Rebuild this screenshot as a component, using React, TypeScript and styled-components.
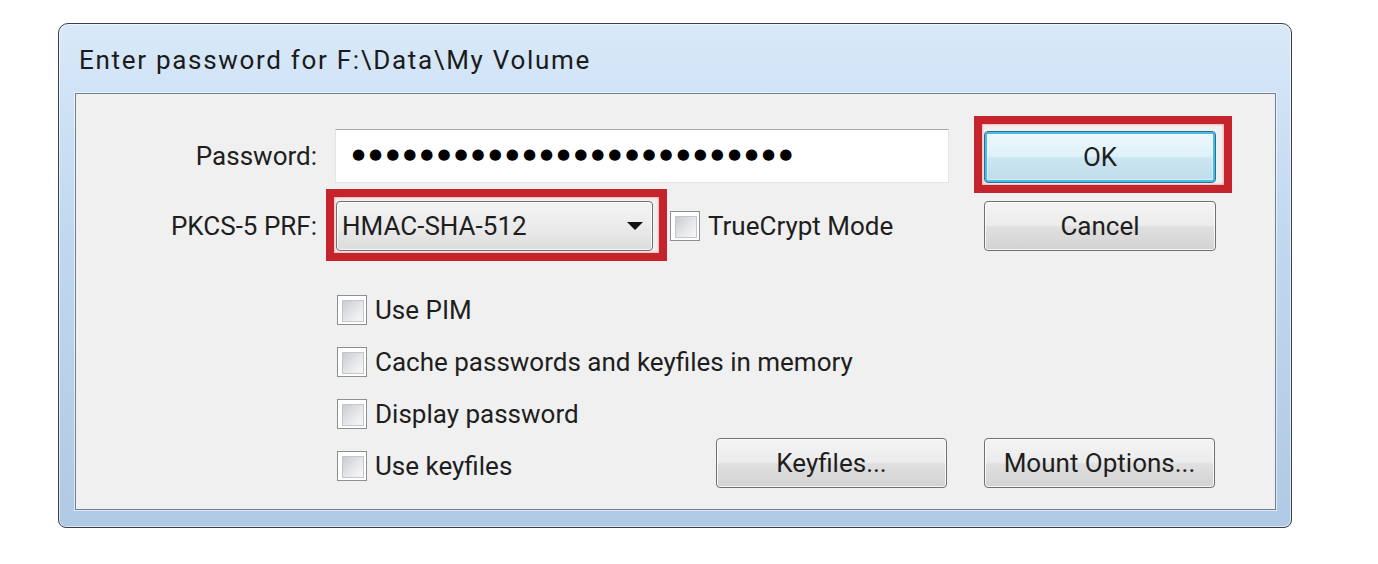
import React from 'react';
import styled, { createGlobalStyle } from 'styled-components';

const GlobalStyle = createGlobalStyle`
  html, body { margin: 0; padding: 0; background: #ffffff; }
  body { font-family: Roboto, "Liberation Sans", sans-serif; color: #1e1e1e; }
  * { box-sizing: border-box; }
`;

const Stage = styled.div`
  width: 1378px;
  height: 564px;
  padding: 23px 0 0 58px;
`;

const Window = styled.div`
  width: 1234px;
  height: 505px;
  border: 1px solid #3b4047;
  border-radius: 10px 10px 8px 8px;
  background: linear-gradient(180deg, #d9e9f8 0%, #d0e3f6 14%, #c0d7ef 45%, #b6cee8 80%, #b0c9e4 100%);
  box-shadow: inset 0 0 0 1px rgba(255, 255, 255, 0.55);
  display: flex;
  flex-direction: column;
`;

const TitleBar = styled.div`
  height: 69px;
  display: flex;
  align-items: center;
  padding: 2px 0 0 20px;
  font-size: 26px;
  letter-spacing: 1.7px;
  color: #1b1b1b;
  white-space: nowrap;
`;

const Panel = styled.div`
  flex: 1;
  margin: 0 15px 17px 16px;
  background: #f0f0f0;
  border: 1px solid #6f7f90;
  box-shadow: 0 0 0 1px rgba(255, 255, 255, 0.6);
  display: flex;
  flex-direction: column;
  padding: 34px 0 21px 0;
`;

const TopGrid = styled.div`
  display: grid;
  grid-template-columns: 241px 631px 232px;
  grid-template-rows: 55px 50px;
  column-gap: 18px;
  row-gap: 18px;
  align-items: center;
`;

const Label = styled.label`
  justify-self: end;
  font-size: 26px;
  white-space: nowrap;
`;

const PasswordBox = styled.div`
  width: 614px;
  height: 54px;
  background: #ffffff;
  border: 1px solid #e3e5ea;
  border-top-color: #a9abb1;
  display: flex;
  align-items: center;
  padding: 0 0 3px 16px;
  overflow: hidden;
`;

const Dots = styled.span`
  font-family: "DejaVu Sans", sans-serif;
  font-size: 15px;
  letter-spacing: 4px;
  color: #000000;
  white-space: nowrap;
`;

const ButtonCell = styled.div<{ $align?: string }>`
  position: relative;
  align-self: ${(p) => p.$align || 'center'};
  width: 232px;
`;

const Button = styled.button<{ $primary?: boolean; $width?: number }>`
  width: ${(p) => (p.$width ? `${p.$width}px` : '100%')};
  height: ${(p) => (p.$primary ? 52 : 50)}px;
  border: 1px solid ${(p) => (p.$primary ? '#2d6e95' : '#707070')};
  border-radius: 4px;
  background: ${(p) =>
    p.$primary
      ? 'linear-gradient(180deg, #eef8fd 0%, #dff1fa 48%, #cce6f2 52%, #bedbe9 100%)'
      : 'linear-gradient(180deg, #f4f4f4 0%, #ececec 48%, #e0e0e0 52%, #d2d2d2 100%)'};
  box-shadow: ${(p) =>
    p.$primary
      ? 'inset 0 0 0 2px #45bde9, inset 0 0 0 3px rgba(255,255,255,0.45)'
      : 'inset 0 0 0 1px rgba(255,255,255,0.8)'};
  font-family: Roboto, "Liberation Sans", sans-serif;
  font-size: 26px;
  color: #1e1e1e;
  display: flex;
  align-items: center;
  justify-content: center;
  padding: 0;
  flex: none;
`;

const Highlight = styled.span<{ $t: number; $r: number; $b: number; $l: number }>`
  position: absolute;
  top: ${(p) => -p.$t}px;
  right: ${(p) => -p.$r}px;
  bottom: ${(p) => -p.$b}px;
  left: ${(p) => -p.$l}px;
  border: 8px solid #c6242c;
  box-shadow: inset 0 0 2px 1px rgba(240, 140, 140, 0.6);
  pointer-events: none;
`;

const FieldRow = styled.div`
  display: flex;
  align-items: center;
`;

const ComboWrap = styled.div`
  position: relative;
  margin-left: 1px;
  margin-right: 17px;
`;

const Combo = styled.div`
  width: 317px;
  height: 50px;
  border: 1px solid #707070;
  border-radius: 4px;
  background: linear-gradient(180deg, #f4f4f4 0%, #ebebeb 50%, #dcdcdc 100%);
  box-shadow: inset 0 0 0 1px rgba(255, 255, 255, 0.75);
  display: flex;
  align-items: center;
  justify-content: space-between;
  padding: 0 9px 0 5px;
  font-size: 26px;
`;

const Arrow = styled.svg`
  width: 16px;
  height: 8px;
  display: block;
`;

const Option = styled.label`
  display: flex;
  align-items: center;
  gap: 8px;
  height: 30px;
  font-size: 26px;
  white-space: nowrap;
`;

const Box = styled.span`
  display: block;
  flex: none;
  width: 30px;
  height: 30px;
  border: 1px solid #8e8f8f;
  background: #ffffff;
  padding: 4px;
  &::after {
    content: '';
    display: block;
    width: 100%;
    height: 100%;
    border: 1px solid #c3c6ca;
    background: linear-gradient(135deg, #c9ccd1 0%, #e3e5e8 50%, #f8f8f8 100%);
  }
`;

const Options = styled.div`
  display: flex;
  flex-direction: column;
  margin-top: 44px;
  padding: 0 60px 0 261px;
`;

const OptionList = styled.div`
  display: flex;
  flex-direction: column;
  gap: 22px;
`;

const BottomRow = styled.div`
  display: flex;
  align-items: center;
  height: 50px;
  margin-top: 9px;
`;

const BottomOption = styled(Option)`
  flex: 1;
  margin-top: 6px;
`;

const ButtonGroup = styled.div`
  display: flex;
  gap: 37px;
`;

const Checkbox: React.FC<{ label: string }> = ({ label }) => (
  <>
    <Box />
    <span>{label}</span>
  </>
);

export default function App() {
  return (
    <Stage>
      <GlobalStyle />
      <Window>
        <TitleBar>Enter password for F:\Data\My Volume</TitleBar>
        <Panel>
          <TopGrid>
            <Label>Password:</Label>
            <PasswordBox>
              <Dots>{'●'.repeat(26)}</Dots>
            </PasswordBox>
            <ButtonCell $align="end">
              <Button $primary>OK</Button>
              <Highlight $t={15} $r={16} $b={10} $l={10} />
            </ButtonCell>

            <Label>PKCS-5 PRF:</Label>
            <FieldRow>
              <ComboWrap>
                <Combo>
                  <span>HMAC-SHA-512</span>
                  <Arrow viewBox="0 0 16 8">
                    <path d="M0 0 L16 0 L8 8 Z" fill="#111" />
                  </Arrow>
                </Combo>
                <Highlight $t={12} $r={14} $b={10} $l={10} />
              </ComboWrap>
              <Option>
                <Checkbox label="TrueCrypt Mode" />
              </Option>
            </FieldRow>
            <ButtonCell>
              <Button>Cancel</Button>
            </ButtonCell>
          </TopGrid>

          <Options>
            <OptionList>
              <Option>
                <Checkbox label="Use PIM" />
              </Option>
              <Option>
                <Checkbox label="Cache passwords and keyfiles in memory" />
              </Option>
              <Option>
                <Checkbox label="Display password" />
              </Option>
            </OptionList>
            <BottomRow>
              <BottomOption>
                <Checkbox label="Use keyfiles" />
              </BottomOption>
              <ButtonGroup>
                <Button $width={231}>Keyfiles...</Button>
                <Button $width={231}>Mount Options...</Button>
              </ButtonGroup>
            </BottomRow>
          </Options>
        </Panel>
      </Window>
    </Stage>
  );
}
